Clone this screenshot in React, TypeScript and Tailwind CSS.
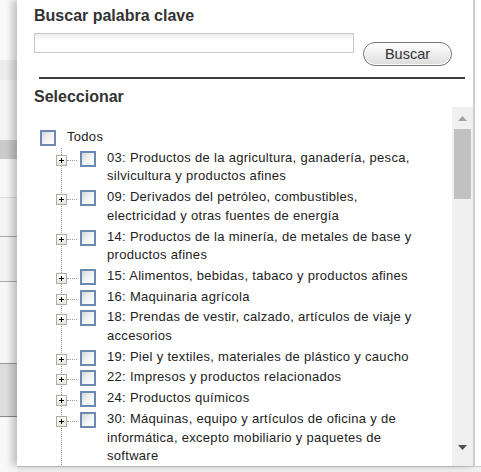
import React from "react";

const ITEMS: string[][] = [
  ["03: Productos de la agricultura, ganadería, pesca,", "silvicultura y productos afines"],
  ["09: Derivados del petróleo, combustibles,", "electricidad y otras fuentes de energía"],
  ["14: Productos de la minería, de metales de base y", "productos afines"],
  ["15: Alimentos, bebidas, tabaco y productos afines"],
  ["16: Maquinaria agrícola"],
  ["18: Prendas de vestir, calzado, artículos de viaje y", "accesorios"],
  ["19: Piel y textiles, materiales de plástico y caucho"],
  ["22: Impresos y productos relacionados"],
  ["24: Productos químicos"],
  ["30: Máquinas, equipo y artículos de oficina y de", "informática, excepto mobiliario y paquetes de", "software"],
];

function Checkbox() {
  return (
    <div className="h-[16px] w-[16px] shrink-0 border-2 border-[#6a8ab2] bg-linear-to-br from-[#d6d6d6] via-[#f2f2f2] to-white" />
  );
}

function Expander() {
  return (
    <div className="mt-[6px] -ml-[6px] flex h-[11px] w-[11px] shrink-0 items-center justify-center border border-[#aeae9c] bg-linear-to-b from-white to-[#e8e8e0]">
      <svg width="9" height="9" viewBox="0 0 9 9">
        <path d="M2 4.5h5M4.5 2v5" stroke="#000" strokeWidth="1" />
      </svg>
    </div>
  );
}

function BackPage() {
  return (
    <div className="flex w-[17px] shrink-0 flex-col bg-[#f8f8f8]">
      <div className="h-[60px] bg-[#f9f9f9]" />
      <div className="h-[20px] bg-[#ececec]" />
      <div className="h-[60px] bg-[#f4f4f4]" />
      <div className="h-[19px] bg-[#cbcbcb]" />
      <div className="h-[38px] bg-[#f8f8f8]" />
      <div className="h-[39px] border-t border-[#dedede] bg-[#f4f4f4]" />
      <div className="h-[45px] border-t border-[#aaaaaa] bg-[#f3f3f3]" />
      <div className="h-[82px] border-t border-[#aaaaaa] bg-[#f6f6f6]" />
      <div className="h-[53px] border-t border-[#999999] bg-[#dddddd]" />
      <div className="flex-1 border-t border-[#888888] bg-[#f8f8f8]" />
    </div>
  );
}

export default function App() {
  return (
    <div className="flex h-[472px] w-[481px] overflow-hidden bg-white font-['Liberation_Sans',Arial,sans-serif]">
      <BackPage />
      <div className="flex flex-1 flex-col">
        <div className="flex h-[466px]">
          <div className="relative z-10 flex w-[458px] flex-col border-r-2 border-[#cccccc] bg-white pl-[17px] pt-[7px] shadow-[-5px_0_7px_rgba(0,0,0,0.22)]">
            <h2 className="text-[16px] font-bold leading-[18px] text-[#333333]">Buscar palabra clave</h2>
            <div className="mt-[8px] flex items-start gap-[9px]">
              <input
                type="text"
                className="h-[20px] w-[320px] border border-[#c9c9c9] bg-linear-to-b from-[#efefef] to-white to-40% px-1 text-[13px] outline-none"
              />
              <button
                type="button"
                className="mt-[9px] h-[24px] w-[89px] rounded-full border border-[#767676] bg-linear-to-b from-white to-[#dcdcdc] text-[14.5px] leading-[20px] text-[#333333] shadow-[inset_0_0_0_1px_#ffffff]"
              >
                Buscar
              </button>
            </div>
            <div className="ml-[5px] mt-[11px] h-[2px] w-[426px] bg-[#3c3c3c]" />
            <h2 className="mt-[9px] text-[16px] font-bold leading-[18px] text-[#333333]">Seleccionar</h2>
            <div className="mt-[1px] flex min-h-0 flex-1 overflow-hidden">
              <div className="flex-1 overflow-hidden pl-[6px] pt-[20px] text-[13px] tracking-[0.3px] text-[#222222]">
                <div className="flex items-start py-[1px]">
                  <div className="mt-[2px]">
                    <Checkbox />
                  </div>
                  <span className="ml-[11px] leading-[18.7px]">Todos</span>
                </div>
                <ul className="ml-[21px] border-l border-dotted border-[#9a9a9a] pb-[60px]">
                  {ITEMS.map((lines, i) => (
                    <li key={i} className="flex items-start py-[1px]">
                      <Expander />
                      <div className="mt-[11px] w-[10px] shrink-0 border-t border-dotted border-[#9a9a9a]" />
                      <div className="ml-[3px] mt-[2px]">
                        <Checkbox />
                      </div>
                      <span className="ml-[11px] whitespace-nowrap leading-[18.7px]">
                        {lines.map((line, j) => (
                          <React.Fragment key={j}>
                            {j > 0 && <br />}
                            {line}
                          </React.Fragment>
                        ))}
                      </span>
                    </li>
                  ))}
                </ul>
              </div>
              <div className="flex w-[21px] shrink-0 flex-col items-center bg-[#f0f0f0]">
                <div className="flex h-[22px] items-center justify-center">
                  <svg width="9" height="5" viewBox="0 0 9 5">
                    <path d="M0 5L4.5 0L9 5Z" fill="#a3a3a3" />
                  </svg>
                </div>
                <div className="h-[70px] w-[17px] bg-[#c1c1c1]" />
                <div className="flex-1" />
                <div className="flex h-[22px] items-start justify-center pt-[1px]">
                  <svg width="9" height="5" viewBox="0 0 9 5">
                    <path d="M0 0L4.5 5L9 0Z" fill="#505050" />
                  </svg>
                </div>
              </div>
            </div>
          </div>
          <div className="flex-1 bg-white" />
        </div>
        <div className="flex-1 border-t border-[#c8c8c8] bg-[#f0f0f0]" />
      </div>
    </div>
  );
}
